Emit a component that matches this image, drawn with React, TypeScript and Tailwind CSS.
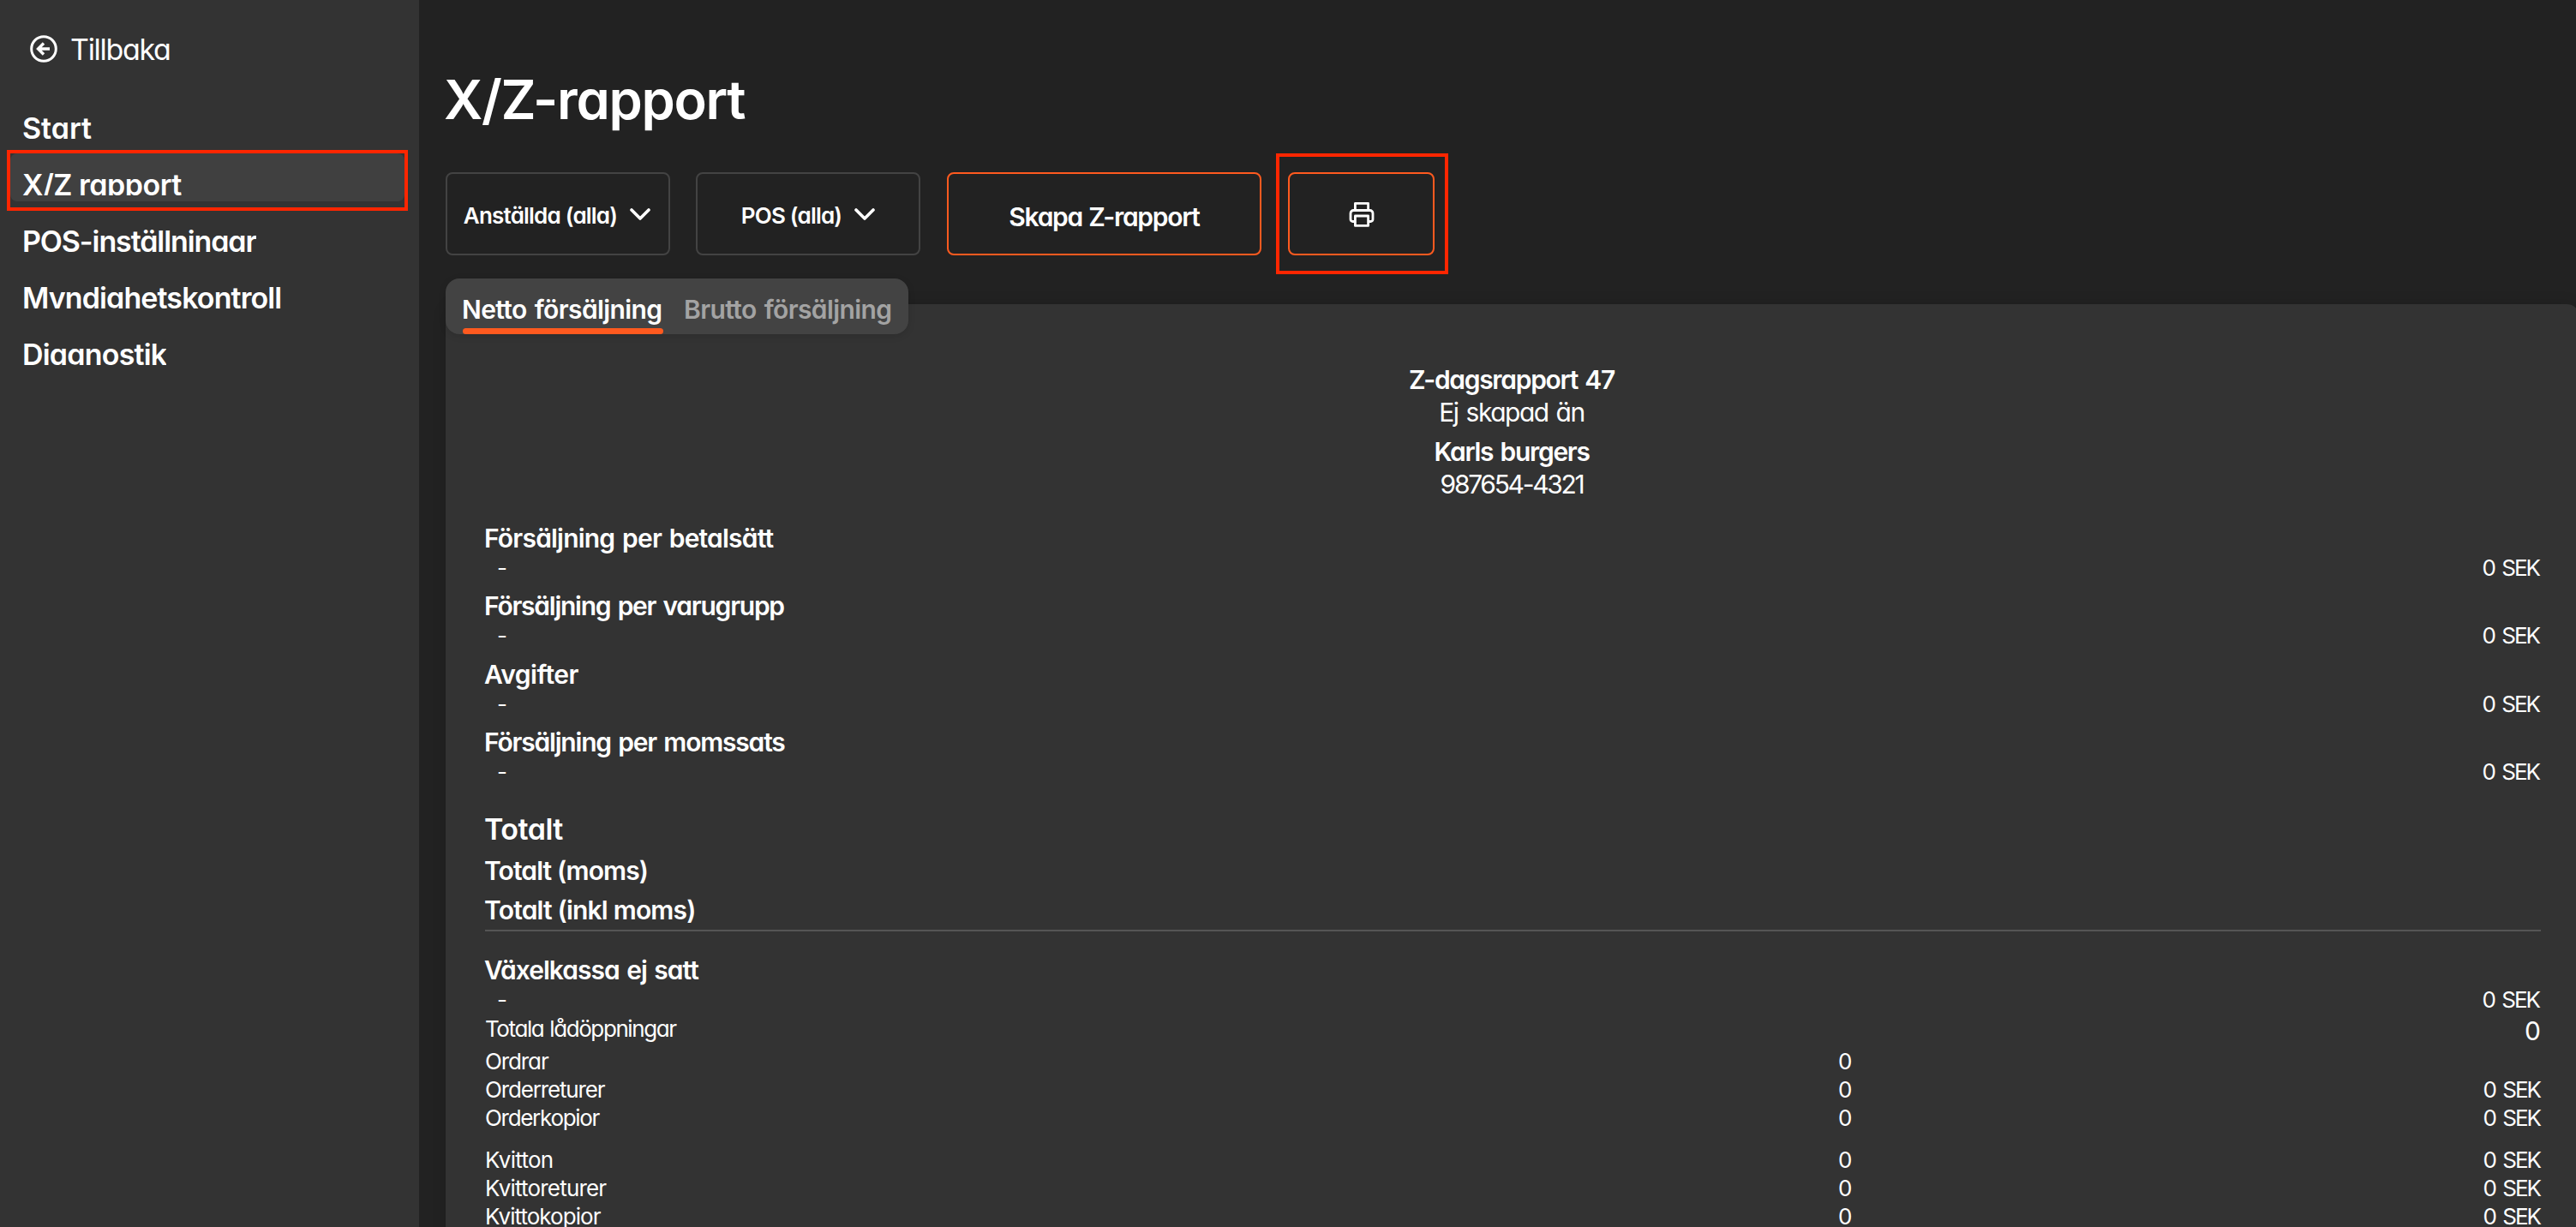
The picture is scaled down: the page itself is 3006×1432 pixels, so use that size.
import { useState } from 'react';

const MENU = [
  { label: 'Start', tracking: 'tracking-[0px]' },
  { label: 'X/Z rapport', tracking: 'tracking-[-0.5px]' },
  { label: 'POS-inställningar', tracking: 'tracking-[-1.1px]' },
  { label: 'Myndighetskontroll', tracking: 'tracking-[-0.9px]' },
  { label: 'Diagnostik', tracking: 'tracking-[-0.8px]' },
];

const TABS = ['Netto försäljning', 'Brutto försäljning'];

const SECTIONS = [
  { title: 'Försäljning per betalsätt', value: '0 SEK', tracking: 'tracking-[-0.8px]' },
  { title: 'Försäljning per varugrupp', value: '0 SEK', tracking: 'tracking-[-1.25px]' },
  { title: 'Avgifter', value: '0 SEK', tracking: 'tracking-[-0.5px]' },
  { title: 'Försäljning per momssats', value: '0 SEK', tracking: 'tracking-[-1.2px]' },
];

const COUNTERS = [
  [
    { label: 'Ordrar', count: 0, sum: '', tracking: 'tracking-[-1.1px]' },
    { label: 'Orderreturer', count: 0, sum: '0 SEK', tracking: 'tracking-[-1.15px]' },
    { label: 'Orderkopior', count: 0, sum: '0 SEK', tracking: 'tracking-[-1.3px]' },
  ],
  [
    { label: 'Kvitton', count: 0, sum: '0 SEK', tracking: 'tracking-[-0.7px]' },
    { label: 'Kvittoreturer', count: 0, sum: '0 SEK', tracking: 'tracking-[-0.8px]' },
    { label: 'Kvittokopior', count: 0, sum: '0 SEK', tracking: 'tracking-[-0.95px]' },
  ],
];

function BackIcon() {
  return (
    <svg width="32" height="32" viewBox="0 0 32 32" fill="none" stroke="currentColor" strokeWidth="3">
      <circle cx="16" cy="16" r="14.3" />
      <path d="M23 16H10.5M16 9.5 9.5 16l6.5 6.5" strokeWidth="3.4" />
    </svg>
  );
}

function ChevronIcon() {
  return (
    <svg width="24" height="14" viewBox="0 0 24 14" fill="none" stroke="currentColor" strokeWidth="3.6" strokeLinecap="round" strokeLinejoin="round">
      <path d="M2 2l10 10L22 2" />
    </svg>
  );
}

function PrintIcon() {
  return (
    <svg width="30" height="30" viewBox="0 0 30 30" fill="none" stroke="currentColor" strokeWidth="2.8" strokeLinejoin="round">
      <path d="M7.4 10.5V2.4h15.2v8.1" />
      <path d="M7.4 23.5H4.5a2.5 2.5 0 0 1-2.5-2.5v-7a3.5 3.5 0 0 1 3.5-3.5h19A3.5 3.5 0 0 1 28 14v7a2.5 2.5 0 0 1-2.5 2.5h-2.9" />
      <path d="M7.4 17h15.2v11.4H7.4z" />
    </svg>
  );
}

function Section({ title, value, tracking }: { title: string; value: string; tracking: string }) {
  return (
    <div>
      <h3 className={`-ml-px h-[38px] text-[30px] leading-[40px] font-semibold [word-spacing:2px] ${tracking}`}>{title}</h3>
      <div className="flex h-[33.33px] justify-between text-[26px] leading-[34px]">
        <span className="pl-[14px]">-</span>
        <span className="pr-[2px] tracking-[-2px] [word-spacing:3px]">{value}</span>
      </div>
    </div>
  );
}

export default function App() {
  const [activeMenu, setActiveMenu] = useState('X/Z rapport');
  const [activeTab, setActiveTab] = useState(TABS[0]);

  return (
    <div className="flex h-[1432px] w-[3006px] overflow-hidden bg-[#222222] font-['Inter','Open_Sans',sans-serif] whitespace-nowrap text-white [font-feature-settings:'cv11']">
      {/* Sidebar */}
      <aside className="w-[489px] shrink-0 bg-[#333333]">
        <button className="mt-[37px] ml-[35px] flex h-10 items-center gap-[15px] text-[34px] leading-10">
          <BackIcon />
          <span className="pt-[2px] tracking-[-1.3px]">Tillbaka</span>
        </button>
        <nav className="mt-[32px] flex flex-col px-2">
          {MENU.map((item) => (
            <button
              key={item.label}
              onClick={() => setActiveMenu(item.label)}
              className="relative flex h-[66px] w-[468px] items-start pt-[4px] text-left"
            >
              <span
                className={`ml-1 flex h-[56px] w-[460px] rounded-lg pt-[20px] pl-[14px] ${
                  activeMenu === item.label ? 'bg-[#404040]' : ''
                }`}
              >
                <span className={`h-[29px] overflow-hidden pt-[3px] text-[34px] leading-[28px] font-semibold ${item.tracking}`}>
                  {item.label}
                </span>
              </span>
              {activeMenu === item.label && (
                <span className="absolute top-0 left-0 h-[71px] w-[468px] border-4 border-[#ff2600]" />
              )}
            </button>
          ))}
        </nav>
      </aside>

      <main className="w-[2517px] shrink-0 pl-[31px]">
        <h1 className="-ml-[2px] mt-[80px] h-[72px] text-[63px] leading-[72px] font-semibold tracking-[-1.3px]">X/Z-rapport</h1>

        {/* Filter och åtgärder */}
        <div className="mt-[49px] flex h-[97px] items-stretch">
          <button className="flex w-[262px] items-center justify-center gap-[15px] rounded-lg border-2 border-[#434343] pr-[2px] text-[26px] font-semibold">
            <span className="pt-[3px] tracking-[-0.8px]">Anställda (alla)</span>
            <ChevronIcon />
          </button>
          <button className="ml-[30px] flex w-[262px] items-center justify-center gap-[15px] rounded-lg border-2 border-[#434343] text-[26px] font-semibold">
            <span className="pt-[3px] tracking-[-0.8px]">POS (alla)</span>
            <ChevronIcon />
          </button>
          <button className="ml-[31px] w-[367px] rounded-lg border-2 border-[#ff5a1f] pt-[7px] text-[30px] font-semibold tracking-[-1.3px] [word-spacing:1px]">
            Skapa Z-rapport
          </button>
          <div className="relative ml-[31px] w-[171px]">
            <button className="flex h-full w-full items-center justify-center rounded-lg border-2 border-[#ff5a1f]">
              <PrintIcon />
            </button>
            <span className="absolute -top-[22px] -left-[14px] h-[141px] w-[201px] border-4 border-[#ff2600]" />
          </div>
        </div>

        {/* Flikar */}
        <div className="relative z-10 mt-[27px] flex h-[65px] w-[540px] gap-[25px] rounded-2xl bg-[#434343] pl-5 shadow-[0_2px_8px_rgba(0,0,0,0.12)]">
          {TABS.map((tab) => (
            <button
              key={tab}
              onClick={() => setActiveTab(tab)}
              className={`flex h-full w-[234px] flex-col justify-between pt-[16px] text-left text-[30px] leading-[40px] font-semibold tracking-[-0.6px] [word-spacing:2px] ${
                activeTab === tab ? 'text-white' : 'text-[#a3a3a3]'
              }`}
            >
              <span className="-ml-px">{tab}</span>
              {activeTab === tab && <span className="h-[7px] w-full rounded-full bg-[#ff5a1f]" />}
            </button>
          ))}
        </div>

        {/* Rapport */}
        <section className="-mt-[35px] h-[1100px] w-[2491px] rounded-2xl bg-[#333333] px-[46px] pt-[69px] shadow-[0_0_16px_rgba(0,0,0,0.15)]">
          <div className="pr-[3px] text-center text-[30px] leading-[38px]">
            <p className="font-semibold tracking-[-1.3px] [word-spacing:2px]">Z-dagsrapport 47</p>
            <p className="tracking-[-1.5px] [word-spacing:2px]">Ej skapad än</p>
            <p className="mt-2 font-semibold tracking-[-1.3px] [word-spacing:2px]">Karls burgers</p>
            <p className="tracking-[-2.3px]">987654-4321</p>
          </div>

          <div className="mt-6 flex flex-col gap-2">
            {SECTIONS.map((s) => (
              <Section key={s.title} {...s} />
            ))}
          </div>

          <div className="mt-[25px] border-b-2 border-[#555555] font-semibold">
            <h2 className="-ml-px text-[34px] leading-[51px] tracking-[-0.5px]">Totalt</h2>
            <p className="-ml-px h-[46px] text-[30px] leading-[47px] tracking-[-0.9px]">Totalt (moms)</p>
            <p className="-ml-px h-[46px] text-[30px] leading-[47px] tracking-[-0.8px]">Totalt (inkl moms)</p>
          </div>

          <div className="mt-[25px]">
            <Section title="Växelkassa ej satt" value="0 SEK" tracking="tracking-[-1px]" />
            <div className="flex h-[38.7px] justify-between">
              <span className="text-[26px] leading-[34px] tracking-[-1.4px] [word-spacing:1px]">Totala lådöppningar</span>
              <span className="text-[30px] leading-[39px]">0</span>
            </div>
          </div>

          <div className="flex flex-col gap-4 text-[26px] leading-[33px]">
            {COUNTERS.map((group, i) => (
              <div key={i}>
                {group.map((row) => (
                  <div key={row.label} className="grid grid-cols-[1579px_1fr_auto]">
                    <span className={row.tracking}>{row.label}</span>
                    <span>{row.count}</span>
                    <span className="pr-px tracking-[-2px] [word-spacing:3px]">{row.sum}</span>
                  </div>
                ))}
              </div>
            ))}
          </div>
        </section>
      </main>
    </div>
  );
}
